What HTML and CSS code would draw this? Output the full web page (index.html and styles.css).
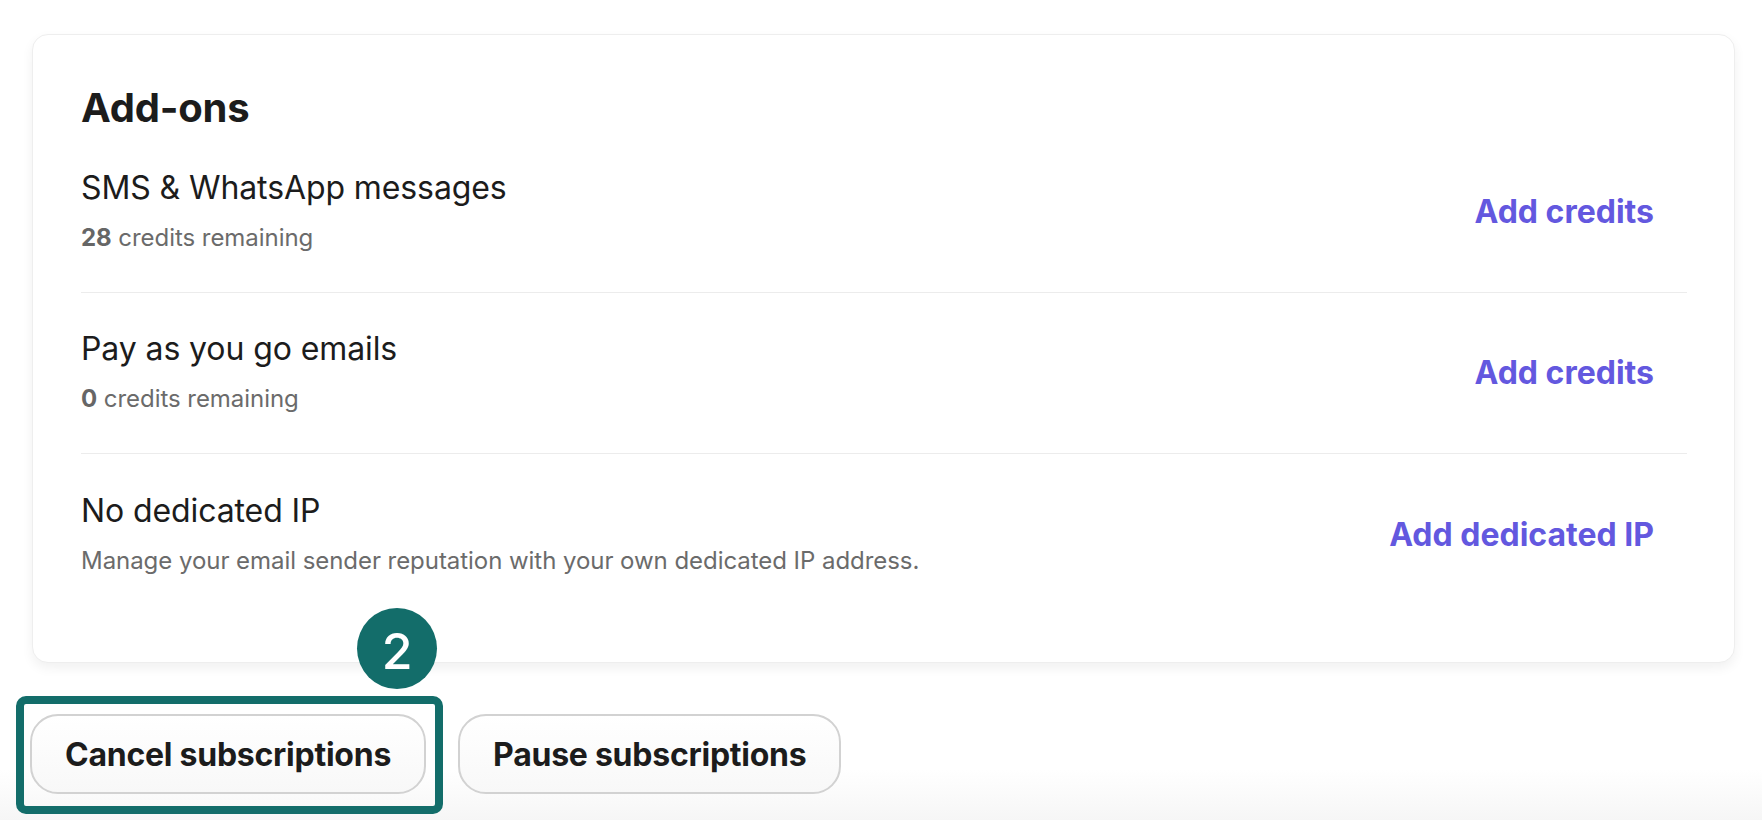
FILE: index.html
```html
<!DOCTYPE html>
<html lang="en">
<head>
<meta charset="utf-8">
<title>Add-ons</title>
<link rel="stylesheet" href="styles.css">
</head>
<body>
<main class="page">
  <section class="card">
    <h2 class="card-title">Add-ons</h2>
    <div class="row">
      <div class="row-info">
        <div class="row-title">SMS &amp; WhatsApp messages</div>
        <div class="row-sub"><strong>28</strong> credits remaining</div>
      </div>
      <a class="row-action" href="#">Add credits</a>
    </div>
    <div class="row">
      <div class="row-info">
        <div class="row-title">Pay as you go emails</div>
        <div class="row-sub"><strong>0</strong> credits remaining</div>
      </div>
      <a class="row-action" href="#">Add credits</a>
    </div>
    <div class="row">
      <div class="row-info">
        <div class="row-title">No dedicated IP</div>
        <div class="row-sub">Manage your email sender reputation with your own dedicated IP address.</div>
      </div>
      <a class="row-action" href="#">Add dedicated IP</a>
    </div>
  </section>
  <div class="actions">
    <div class="highlighted">
      <button class="btn" type="button">Cancel subscriptions</button>
      <span class="highlight-frame"></span>
      <span class="step-badge">2</span>
    </div>
    <button class="btn" type="button">Pause subscriptions</button>
  </div>
</main>
</body>
</html>
```

FILE: styles.css
```css
* { box-sizing: border-box; }

html, body { margin: 0; }

body {
  font-family: Inter, "Noto Sans", "Liberation Sans", sans-serif;
  color: #1c1c1c;
  background: linear-gradient(to bottom, #ffffff 0, #ffffff 770px, #f6f6f6 820px);
  min-height: 820px;
}

.page {
  padding: 34px 27px 0 32px;
}

.card {
  background: #ffffff;
  border: 1px solid #eeeeee;
  border-radius: 16px;
  box-shadow: 0 5px 12px rgba(0, 0, 0, 0.06);
  padding: 49px 47px 48px 48px;
}

.card-title {
  margin: 0;
  font-size: 40px;
  line-height: 48px;
  font-weight: 700;
  color: #1c1c1c;
  letter-spacing: -0.2px;
}

.row {
  display: flex;
  align-items: center;
  justify-content: space-between;
  padding: 32px 0 36px;
}

.row + .row {
  border-top: 1px solid #ececec;
}

.row:last-child {
  padding-top: 33px;
  padding-bottom: 35px;
}

.row-title {
  font-size: 32px;
  line-height: 48px;
  color: #1c1c1c;
  letter-spacing: -0.1px;
}

.row-sub {
  margin-top: 8px;
  font-size: 24px;
  line-height: 36px;
  color: #6b6b6b;
  letter-spacing: -0.05px;
}

.row-sub strong {
  font-weight: 700;
  color: #666666;
}

.row-action {
  font-size: 32px;
  line-height: 48px;
  font-weight: 700;
  color: #6358df;
  text-decoration: none;
  padding: 12px 33px 8px;
}

.actions {
  display: flex;
  gap: 32px;
  margin-top: 51px;
  margin-left: -2px;
}

.highlighted {
  position: relative;
}

.btn {
  height: 80px;
  padding: 0 33px;
  border: 2px solid #d2d2d2;
  border-radius: 28px;
  background: linear-gradient(to bottom, #ffffff, #f8f8f8);
  font-family: Inter, "Noto Sans", "Liberation Sans", sans-serif;
  font-size: 32px;
  font-weight: 700;
  letter-spacing: -0.25px;
  color: #1c1c1c;
  cursor: pointer;
}

.highlight-frame {
  position: absolute;
  left: -14px;
  right: -17px;
  top: -18px;
  bottom: -20px;
  border: 8px solid #136d6a;
  border-radius: 10px;
  pointer-events: none;
}

.step-badge {
  position: absolute;
  right: -11px;
  top: -106px;
  width: 80px;
  height: 81px;
  border-radius: 50%;
  background: #136d6a;
  color: #ffffff;
  font-size: 50px;
  font-weight: 500;
  display: flex;
  align-items: center;
  justify-content: center;
  padding-top: 4px;
}
```
